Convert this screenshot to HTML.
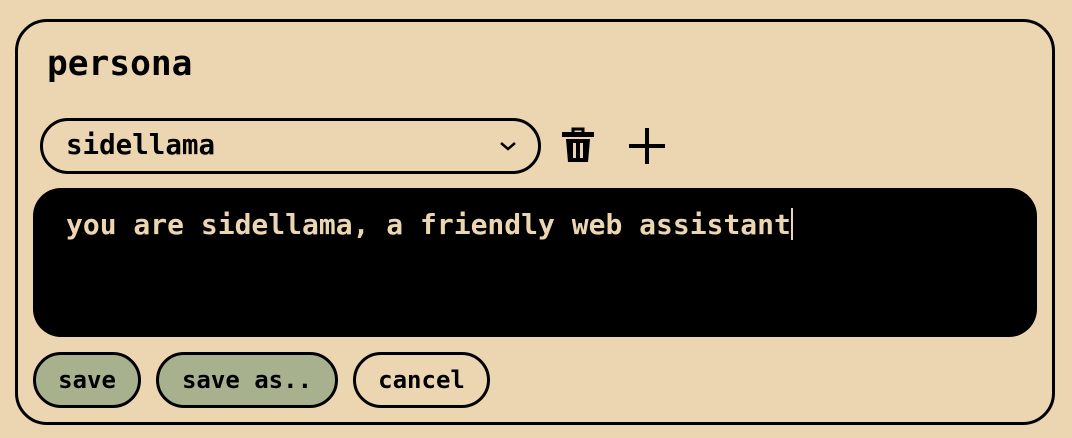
<!DOCTYPE html>
<html><head><style>
body{margin:0;width:1072px;height:438px;background:#ecd6b2;position:relative;overflow:hidden;font-family:"DejaVu Sans Mono","Liberation Mono",monospace;font-weight:bold;color:#000}
.card{position:absolute;left:15px;top:19px;width:1034px;height:400px;border:3px solid #000;border-radius:32px}
.t{position:absolute;left:47px;top:41px;font-size:34.5px;line-height:46px}
.sel{position:absolute;left:40px;top:118px;width:495px;height:50px;border:3px solid #000;border-radius:28px;box-sizing:content-box}
.sel span{position:absolute;left:23px;top:-1px;line-height:50px;font-size:27.5px}
.ta{position:absolute;left:33px;top:188px;width:1004px;height:149px;background:#000;border-radius:28px}
.ta span{position:absolute;left:33px;top:17px;font-size:28px;line-height:40px;color:#ecd6b2}
.cur{display:inline-block;width:2px;height:32px;background:#ecd6b2;vertical-align:-6px;margin-left:0}
.b{position:absolute;top:352px;height:50px;border:3px solid #000;border-radius:28px;font-size:24px;line-height:50px;text-align:center}
</style></head><body>
<div class="card"></div>
<div class="t">persona</div>
<div class="sel"><span>sidellama</span>
<svg style="position:absolute;left:456px;top:19px" width="18" height="12" viewBox="0 0 18 12"><path d="M2 3 L9 9 L16 3" fill="none" stroke="#000" stroke-width="2.5"/></svg></div>
<svg style="position:absolute;left:560px;top:126px" width="36" height="38" viewBox="0 0 36 38"><path d="M13 6 V3 H23 V6" fill="none" stroke="#000" stroke-width="3"/><rect x="2" y="6" width="32" height="5" fill="#000"/><path d="M6 13 H30 L28 36 H8 Z" fill="#000"/><rect x="13" y="17" width="3" height="15" fill="#ecd6b2"/><rect x="20" y="17" width="3" height="15" fill="#ecd6b2"/></svg>
<svg style="position:absolute;left:627px;top:126px" width="40" height="40" viewBox="0 0 40 40"><path d="M20 2 V38 M2 20 H38" stroke="#000" stroke-width="4"/></svg>
<div class="ta"><span>you are sidellama, a friendly web assistant<i class="cur"></i></span></div>
<div class="b" style="left:33px;width:102px;background:#a8b18d">save</div>
<div class="b" style="left:156px;width:176px;background:#a8b18d">save as..</div>
<div class="b" style="left:353px;width:131px">cancel</div>
</body></html>
